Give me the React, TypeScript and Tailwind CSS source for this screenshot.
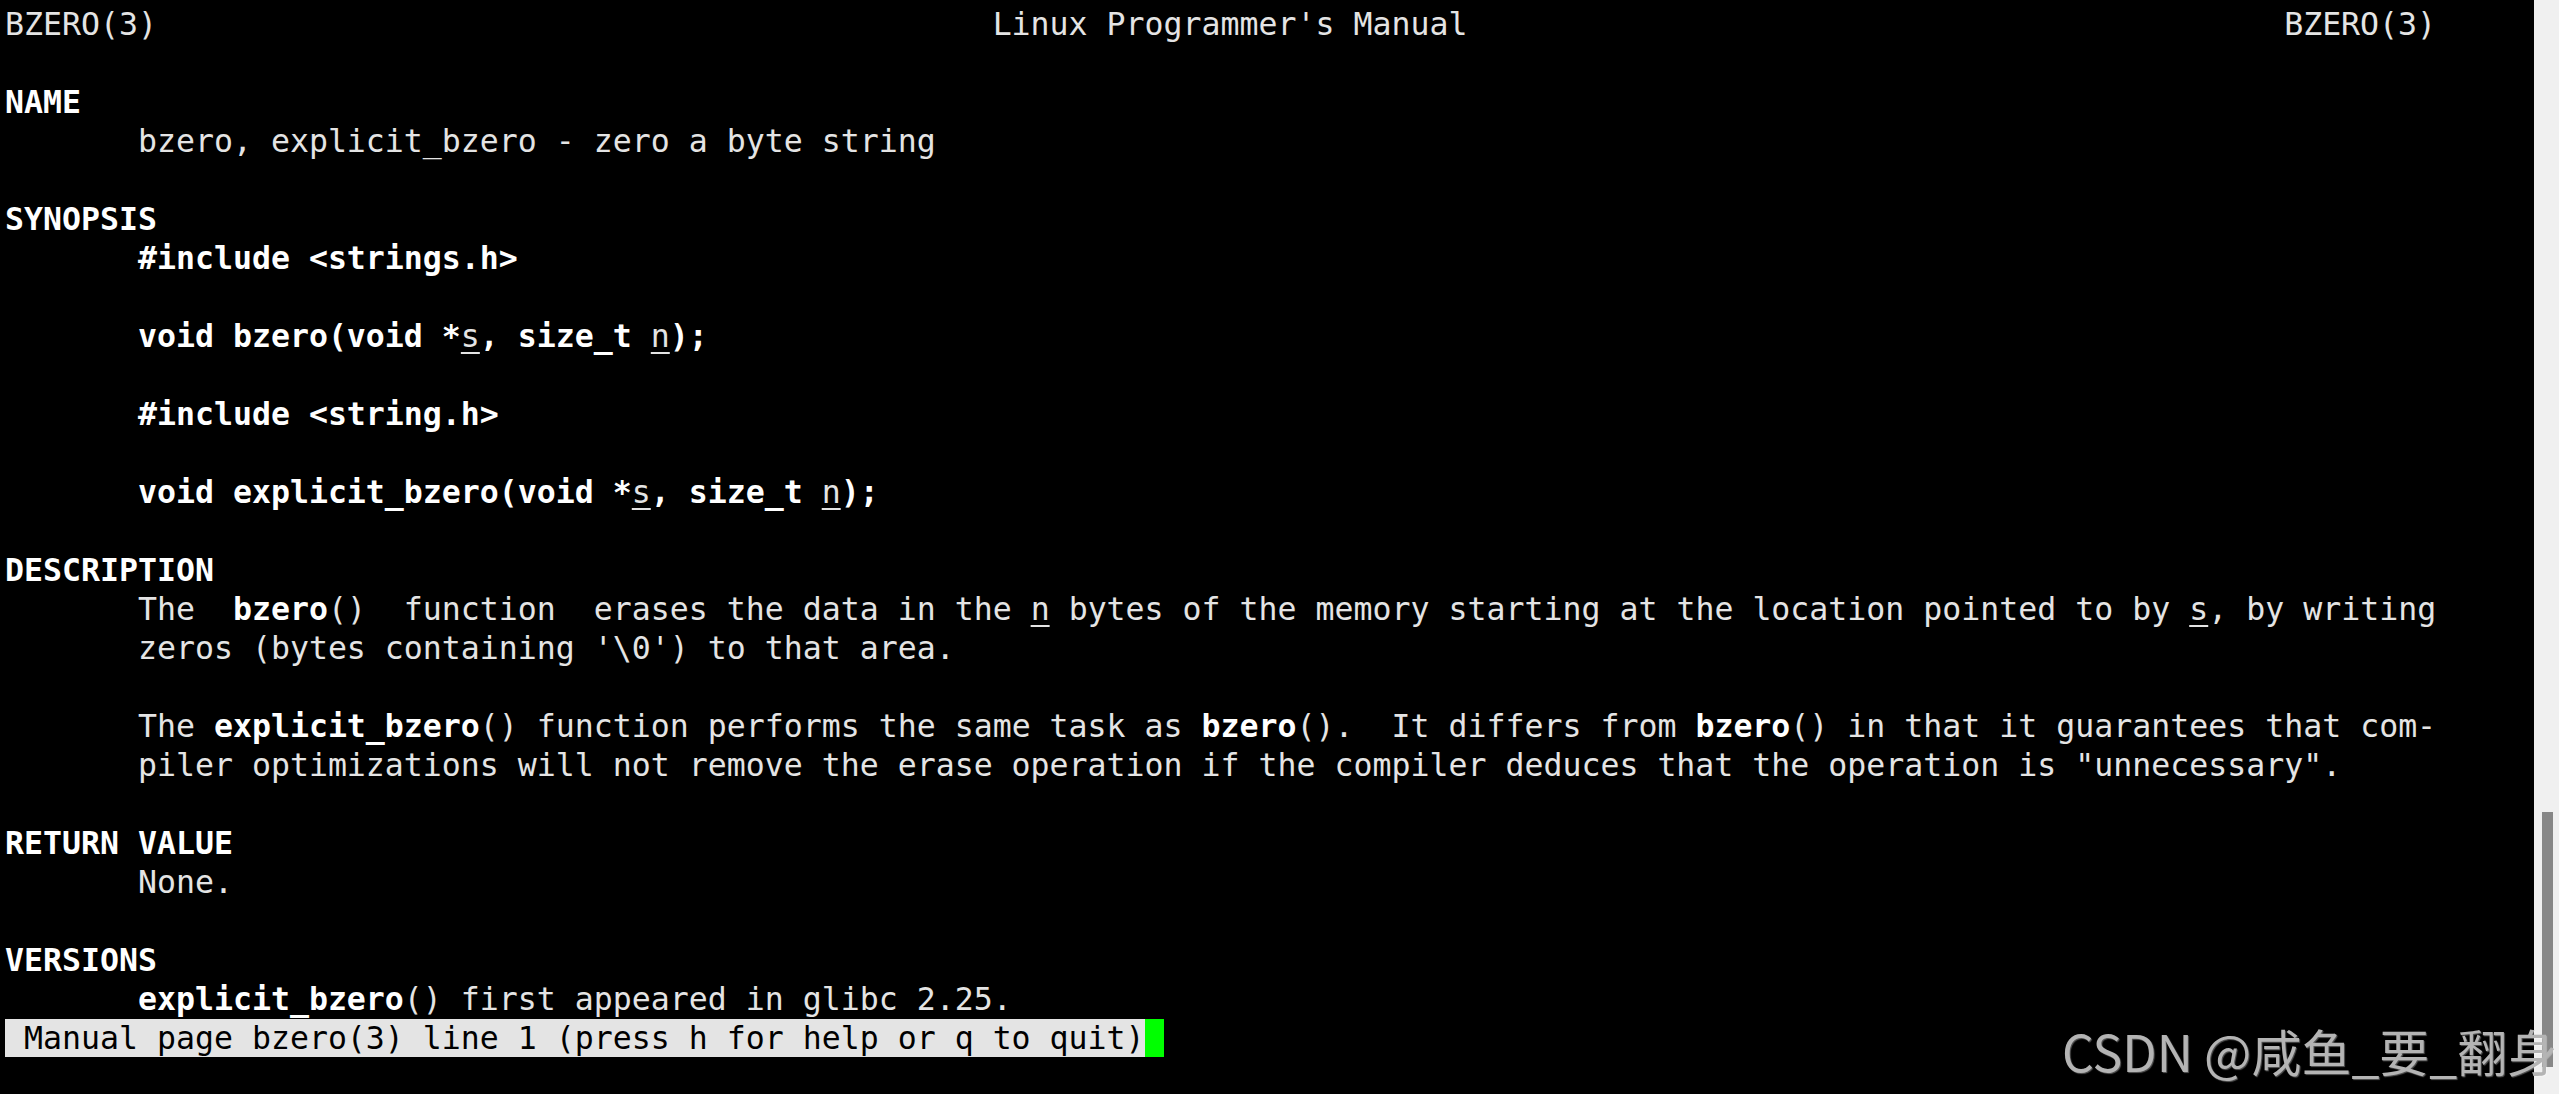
import React from 'react';

// one terminal cell row: 39px tall, DejaVu Sans Mono at ~19px advance
type Seg = { t: string; b?: boolean; u?: boolean };

const IND = '       ';

const line = (...segs: (string | Seg)[]): Seg[] =>
  segs.map((s) => (typeof s === 'string' ? { t: s } : s));
const B = (t: string): Seg => ({ t, b: true });
const U = (t: string): Seg => ({ t, u: true });

const LINES: Seg[][] = [
  line('BZERO(3)' + ' '.repeat(44) + "Linux Programmer's Manual" + ' '.repeat(43) + 'BZERO(3)'),
  [],
  line(B('NAME')),
  line(IND + 'bzero, explicit_bzero - zero a byte string'),
  [],
  line(B('SYNOPSIS')),
  line(IND, B('#include <strings.h>')),
  [],
  line(IND, B('void bzero(void *'), U('s'), B(', size_t '), U('n'), B(');')),
  [],
  line(IND, B('#include <string.h>')),
  [],
  line(IND, B('void explicit_bzero(void *'), U('s'), B(', size_t '), U('n'), B(');')),
  [],
  line(B('DESCRIPTION')),
  line(
    IND + 'The  ',
    B('bzero'),
    '()  function  erases the data in the ',
    U('n'),
    ' bytes of the memory starting at the location pointed to by ',
    U('s'),
    ', by writing'
  ),
  line(IND + "zeros (bytes containing '\\0') to that area."),
  [],
  line(
    IND + 'The ',
    B('explicit_bzero'),
    '() function performs the same task as ',
    B('bzero'),
    '().  It differs from ',
    B('bzero'),
    '() in that it guarantees that com-'
  ),
  line(IND + 'piler optimizations will not remove the erase operation if the compiler deduces that the operation is "unnecessary".'),
  [],
  line(B('RETURN VALUE')),
  line(IND + 'None.'),
  [],
  line(B('VERSIONS')),
  line(IND, B('explicit_bzero'), '() first appeared in glibc 2.25.'),
];

function Row({ segs }: { segs: Seg[] }) {
  return (
    <div className="h-[39px] leading-[39px] whitespace-pre">
      {segs.map((s, i) => (
        <span
          key={i}
          className={
            s.b
              ? 'font-bold text-white'
              : s.u
              ? 'underline decoration-2 underline-offset-[5px]'
              : ''
          }
        >
          {s.t}
        </span>
      ))}
    </div>
  );
}

export default function App() {
  return (
    <div className="relative flex h-[1094px] w-full overflow-hidden bg-black">
      {/* terminal */}
      <div
        className="flex-1 pl-[5px] pt-[5px] text-[31.56px] text-[#e4e4e4]"
        style={{ fontFamily: '"DejaVu Sans Mono", monospace' }}
      >
        {LINES.map((segs, i) => (
          <Row key={i} segs={segs} />
        ))}
        {/* less prompt */}
        <div className="flex h-[38px] items-center">
          <span className="h-[38px] whitespace-pre bg-[#e4e4e4] leading-[38px] text-black">
            {' Manual page bzero(3) line 1 (press h for help or q to quit)'}
          </span>
          <span className="h-[38px] w-[19px] bg-[#00ff00]" />
        </div>
      </div>

      {/* scrollbar */}
      <div className="flex w-[25px] flex-col bg-[#f0f0f0] pl-[8px] pt-[812px]">
        <div className="h-[255px] w-[11px] bg-[#878787]" />
      </div>

      {/* watermark */}
      <div
        className="absolute bottom-[19px] left-[2062px] whitespace-nowrap text-[50px] leading-none text-[#b4b4b4] [text-shadow:1px_1px_1px_rgba(255,255,255,0.35)]"
        style={{ fontFamily: '"Noto Sans CJK SC", sans-serif' }}
      >
        CSDN @咸鱼_要_翻身
      </div>
    </div>
  );
}
